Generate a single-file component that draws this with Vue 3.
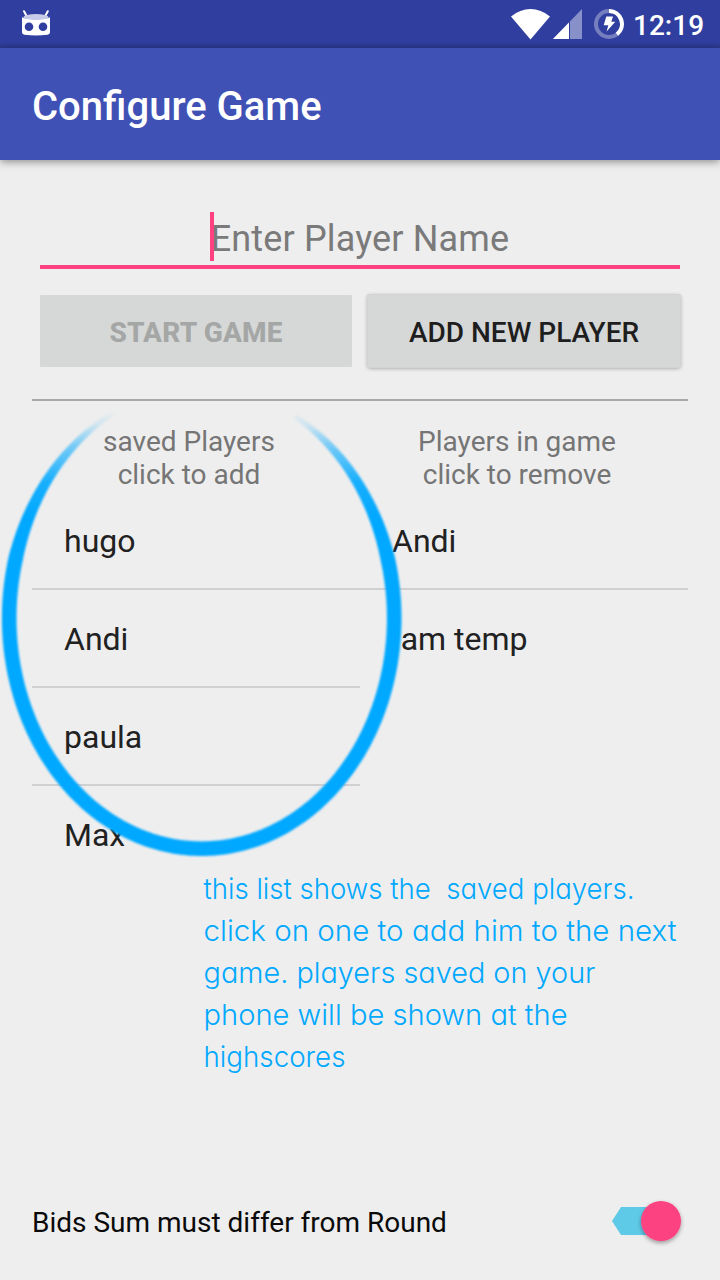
<script setup>
const saved = ['hugo', 'Andi', 'paula', 'Max']
const inGame = ['Andi', 'Iam temp']
const noteLines = [
  { text: 'this list shows the\u00a0 saved players.', width: 431 },
  { text: 'click on one to add him to the next', width: 473 },
  { text: 'game. players saved on your', width: 392 },
  { text: 'phone will be shown at the', width: 364 },
  { text: 'highscores', width: 142 }
]

// Brush stroke: an open ellipse whose two ends taper off near the top
const cx = 201.7
const cy = 618
const rx = 192.5
const ry = 230.7
const tip = 154
function strokeOutline() {
  const outer = []
  const inner = []
  for (let a = -tip; a <= tip - 3; a += 1) {
    const t = (a * Math.PI) / 180
    const x = cx + rx * Math.sin(t)
    const y = cy + ry * Math.cos(t)
    let nx = Math.sin(t) / rx
    let ny = Math.cos(t) / ry
    const len = Math.hypot(nx, ny)
    nx /= len
    ny /= len
    const k = Math.max(0, (Math.abs(a) - 105) / (tip - 105))
    const half = 7.3 - 5.2 * k
    outer.push(`${(x + nx * half).toFixed(2)},${(y + ny * half).toFixed(2)}`)
    inner.unshift(`${(x - nx * half).toFixed(2)},${(y - ny * half).toFixed(2)}`)
  }
  return 'M' + outer.concat(inner).join('L') + 'Z'
}
const ring = strokeOutline()
</script>

<template>
  <div class="screen">
    <div class="status">
      <svg class="robot" width="32" height="30" viewBox="20 8 32 30">
        <path d="M24 11.2L26.6 16M47.8 11.2L45.2 16" stroke="#fff" stroke-width="2" stroke-linecap="round" />
        <path d="M22 17C24 20 48 20 50 17V32Q50 34.4 47.5 34.8Q36 36.4 24.500 34.800Q22 34.400 22 32Z" fill="#fff" />
        <ellipse cx="36" cy="17" rx="12.500" ry="3" fill="#c7cbe8" />
        <circle cx="29" cy="26.700" r="4.300" fill="#303f9f" />
        <circle cx="43" cy="26.700" r="4.300" fill="#303f9f" />
      </svg>
      <svg class="signals" width="120" height="36" viewBox="508 6 120 36">
        <path d="M511 16.500Q520 9 530.500 9Q541 9 550 16.500L530.500 39.500Z" fill="#fff" />
        <path d="M582 9V39H553Z" fill="#8890ca" />
        <path d="M569 22.500V39H553Z" fill="#fff" />
        <path d="M569.500 22V39" stroke="#303f9f" />
        <circle cx="609" cy="24" r="13" fill="none" stroke="#757fc0" stroke-width="4" />
        <path d="M609 11A13 13 0 0 1 617 34.200" fill="none" stroke="#fff" stroke-width="4" />
        <path d="M606.300 16.500H613L611.300 21.800H615.300L606.600 31.500L608.300 25.300H603.700Z" fill="#fff" />
      </svg>
      <span class="time">12:19</span>
    </div>
    <header class="bar"><h1>Configure Game</h1></header>

    <main>
      <div class="field"><span class="hint"><i class="caret"></i>Enter Player Name</span></div>
      <div class="buttons">
        <button class="btn off">START GAME</button>
        <button class="btn on">ADD NEW PLAYER</button>
      </div>
      <div class="rule"></div>
      <div class="labels">
        <p class="l">saved Players<br>click to add</p>
        <p class="r">Players in game<br>click to remove</p>
      </div>
      <div class="lists">
        <ul><li v-for="p in saved" :key="p">{{ p }}</li></ul>
        <ul><li v-for="p in inGame" :key="p">{{ p }}</li></ul>
      </div>
      <div class="option">
        <span>Bids Sum must differ from Round</span>
        <svg width="84" height="60" viewBox="604 1192 84 60">
          <defs>
            <filter id="knob" x="-30%" y="-30%" width="160%" height="160%">
              <feDropShadow dx="0" dy="2" stdDeviation="2" flood-color="#000" flood-opacity=".36" />
            </filter>
          </defs>
          <path d="M612 1221L621 1207H661V1235H621Z" fill="#5fcae7" />
          <circle cx="661" cy="1221" r="20" fill="#fc4280" filter="url(#knob)" />
        </svg>
      </div>
    </main>

    <svg class="overlay" width="720" height="1280" viewBox="0 0 720 1280">
      <defs>
        <linearGradient id="fade" gradientUnits="userSpaceOnUse" x1="0" y1="411" x2="0" y2="520">
          <stop offset="0" stop-color="#00a8ff" stop-opacity="0" />
          <stop offset=".12" stop-color="#00a8ff" stop-opacity=".12" />
          <stop offset=".35" stop-color="#00a8ff" stop-opacity=".55" />
          <stop offset=".65" stop-color="#00a8ff" stop-opacity=".9" />
          <stop offset="1" stop-color="#00a8ff" />
        </linearGradient>
        <filter id="soft"><feGaussianBlur stdDeviation=".8" /></filter>
      </defs>
      <path :d="ring" fill="url(#fade)" filter="url(#soft)" />
      <g class="note">
        <text v-for="(l, i) in noteLines" :key="i" x="203.500" :y="899 + i * 42" :textLength="l.width" lengthAdjust="spacingAndGlyphs">{{ l.text }}</text>
      </g>
    </svg>
  </div>
</template>

<style>
html, body { margin: 0; background: #eee; }
</style>

<style scoped>
.screen { position: relative; width: 720px; height: 1280px; overflow: hidden; background: #eee; font-family: Roboto, sans-serif; display: flex; flex-direction: column; }
.status { height: 48px; box-sizing: border-box; background: linear-gradient(#303f9f 42px, #2c3990 48px); display: flex; align-items: flex-start; padding: 6px 16px 0 20px; }
.robot { margin-top: 2px; }
.signals { margin-left: auto; }
.time { color: #fff; font-size: 28px; font-weight: 500; line-height: 39px; margin-left: 5px; width: 71px; }
.bar { height: 112px; box-sizing: border-box; padding: 5px 32px 0; background: #3f51b5; box-shadow: 0 2px 8px rgba(0,0,0,.4); display: flex; align-items: center; }
h1 { margin: 0; color: #fff; font-size: 40px; line-height: 49px; font-weight: 500; }
main { flex: 1; display: flex; flex-direction: column; padding: 0 32px; }
.field { height: 109px; box-sizing: border-box; margin: 0 8px; padding-top: 53px; border-bottom: 4px solid #ff4081; text-align: center; }
.hint { position: relative; font-size: 36px; letter-spacing: .15px; line-height: 53px; color: #7a7a7a; }
.caret { position: absolute; left: -1px; top: -6px; width: 4px; height: 49px; background: #ff4081; }
.buttons { display: flex; gap: 16px; margin: 26px 8px 0; }
.btn { flex: 1; height: 72px; border: 0; padding: 3px 0 0; border-radius: 1px; background: #d6d8d7; font: 500 28px/32px Roboto, sans-serif; color: #1e1e1e; white-space: nowrap; }
.off { color: #a5a7a6; font-weight: 800; letter-spacing: .15px; }
.on { box-shadow: 0 0 0 1px #d2d4d3, 0 1px 4px rgba(0,0,0,.4); }
.rule { height: 2px; margin-top: 32px; background: #a9a9a9; }
.labels { display: flex; margin-top: 24px; height: 67px; font-size: 28px; line-height: 33px; color: #757575; text-align: center; }
.labels p { margin: 0; }
.l { width: 314px; }
.r { flex: 1; }
.lists { display: flex; }
ul { flex: 1; list-style: none; margin: 0; padding: 0; }
li { height: 96px; line-height: 98px; padding-left: 32px; font-size: 32px; color: #212121; border-bottom: 2px solid #d0d0d0; }
li:last-child { border-bottom: 0; }
.option { display: flex; align-items: center; justify-content: space-between; margin-top: auto; height: 60px; margin-bottom: 28px; font-size: 28px; color: #0a0a0a; }
.overlay { position: absolute; left: 0; top: 0; }
.note { font-family: Inter, sans-serif; font-size: 28.5px; font-weight: 350; font-feature-settings: "cv11"; fill: #00a8ff; }
</style>
